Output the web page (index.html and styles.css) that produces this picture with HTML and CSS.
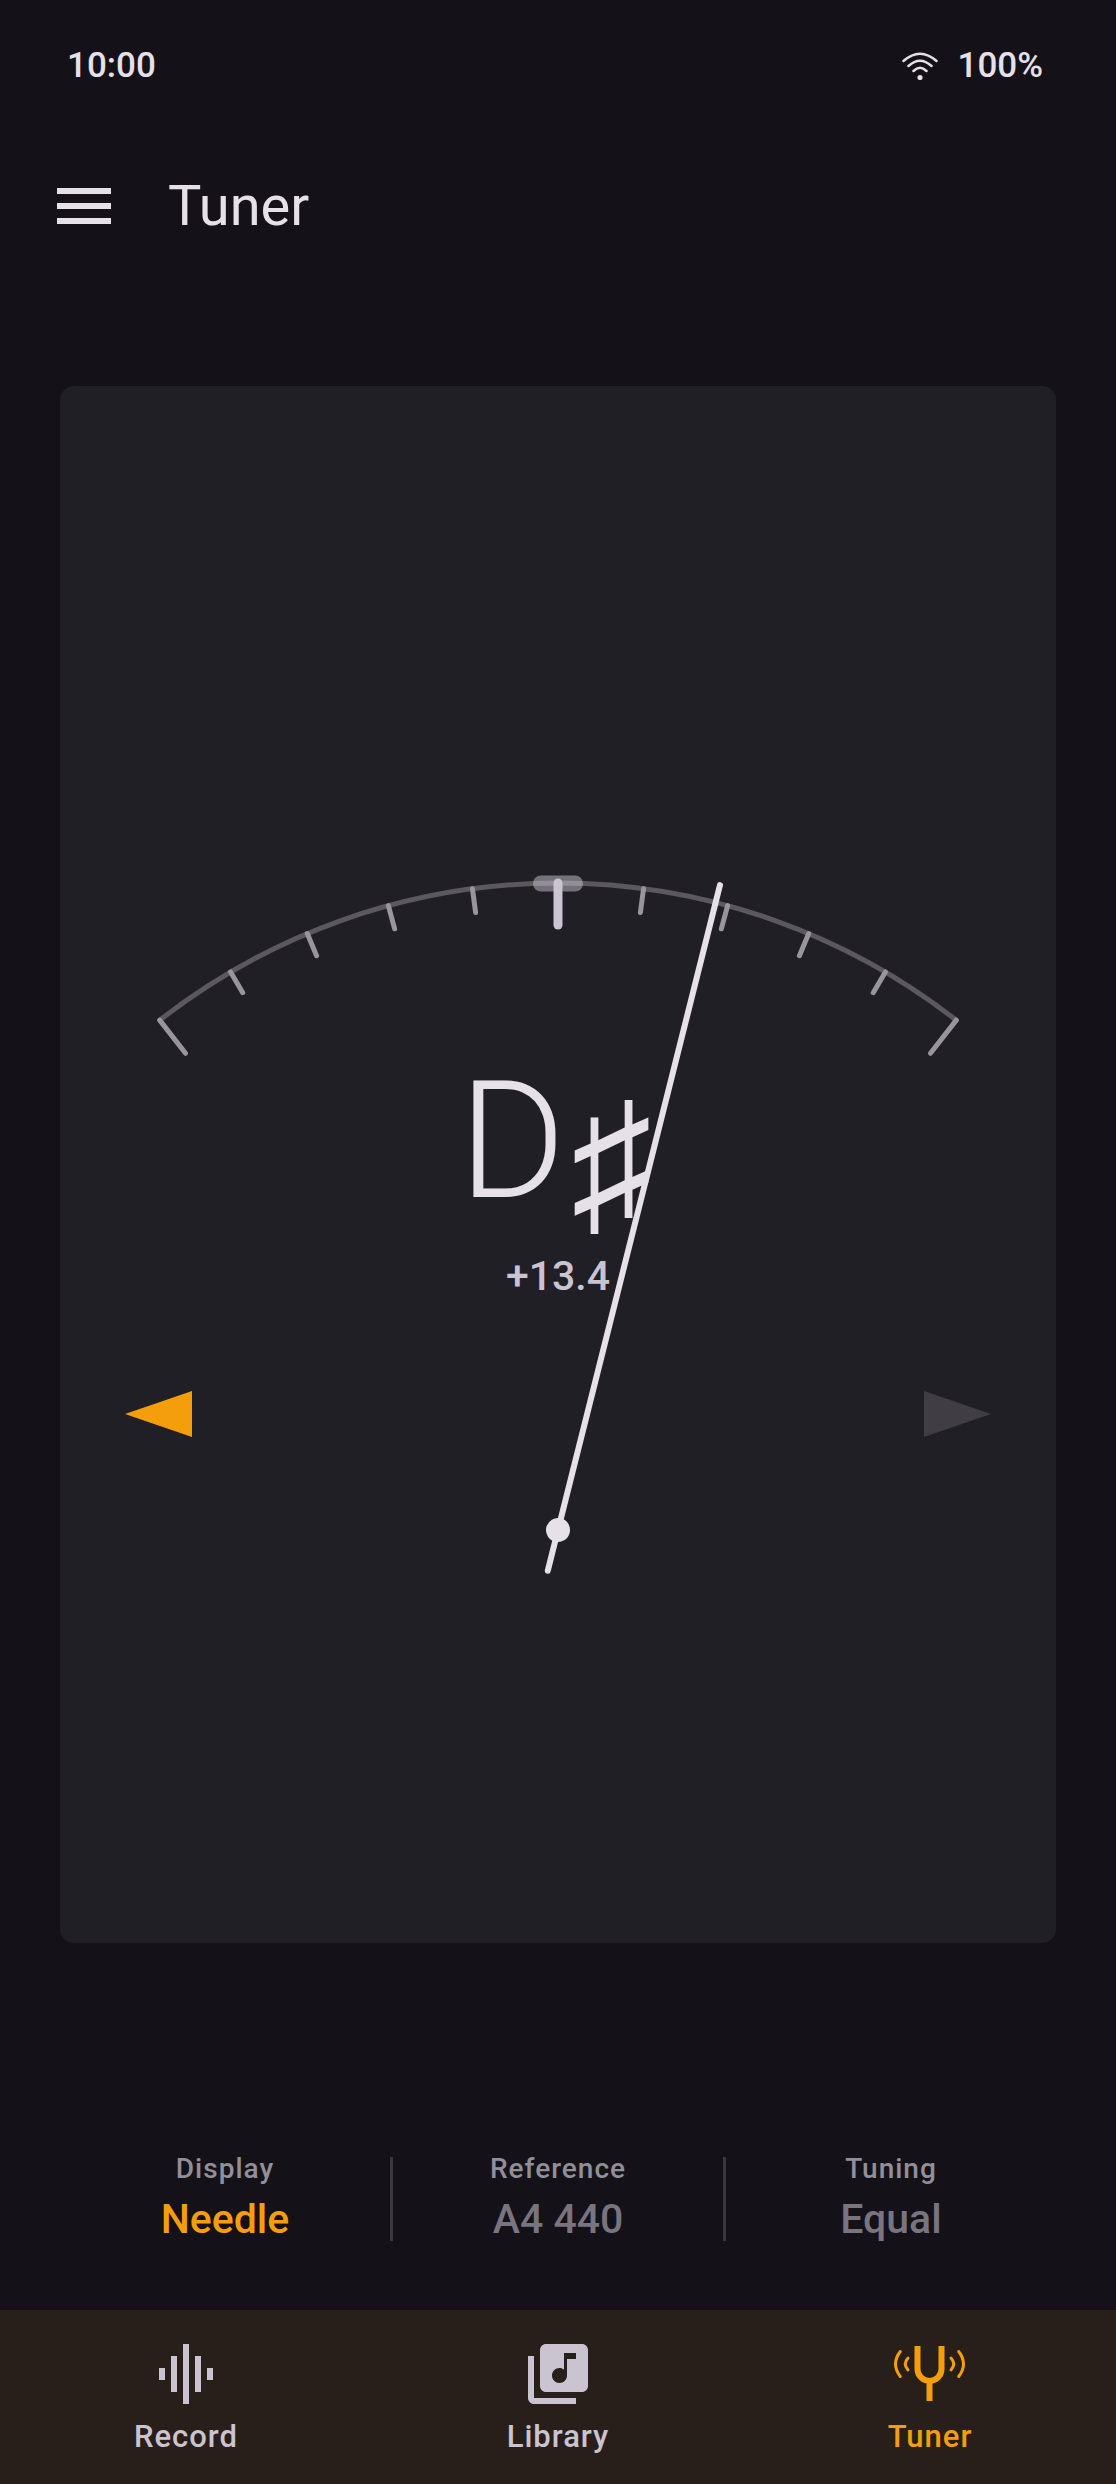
FILE: index.html
```html
<!DOCTYPE html>
<html lang="en">
<head>
<meta charset="utf-8">
<meta name="viewport" content="width=device-width, initial-scale=1">
<title>Tuner</title>
<link rel="stylesheet" href="styles.css">
</head>
<body>
<div class="app">
  <div class="status">
    <span>10:00</span>
    <span class="status-right">
      <svg class="wifi" viewBox="0 0 36 28" aria-hidden="true">
        <path d="M1.500 9Q18-5.500 34.500 9M6.500 14Q18 3.500 29.500 14M11.500 19Q18 12.500 24.500 19"/>
        <circle cx="18" cy="25.500" r="2.600"/>
      </svg>
      <span>100%</span>
    </span>
  </div>

  <header class="topbar">
    <button class="menu" type="button" aria-label="Menu">
      <svg viewBox="0 0 24 24" aria-hidden="true"><path d="M3 18h18v-2H3v2zm0-5h18v-2H3v2zm0-7v2h18V6H3z"/></svg>
    </button>
    <h1 class="title">Tuner</h1>
  </header>

  <main class="card">
    <div class="gauge">
      <div class="readout">
        <div class="note"><span>D</span><span class="accidental">♯</span></div>
        <div class="cents">+13.4</div>
      </div>
      <svg class="dial" viewBox="0 0 996 820" aria-hidden="true">
        <path class="arc" d="M99.700 265.200A647 647 0 0 1 896.300 265.200"/>
        <path class="zone" d="M481 128.500H515"/>
        <g class="ticks">
          <path d="M498 128v42" transform="rotate(-38 498 775)"/>
          <path d="M498 128v24" transform="rotate(-30.400 498 775)"/>
          <path d="M498 128v24" transform="rotate(-22.800 498 775)"/>
          <path d="M498 128v24" transform="rotate(-15.200 498 775)"/>
          <path d="M498 128v24" transform="rotate(-7.600 498 775)"/>
          <path d="M498 128v24" transform="rotate(7.600 498 775)"/>
          <path d="M498 128v24" transform="rotate(15.200 498 775)"/>
          <path d="M498 128v24" transform="rotate(22.800 498 775)"/>
          <path d="M498 128v24" transform="rotate(30.400 498 775)"/>
          <path d="M498 128v42" transform="rotate(38 498 775)"/>
        </g>
        <path class="centre" d="M498 128v42"/>
        <path class="flat on" d="M65 659L132 636V682Z"/>
        <path class="sharp" d="M931 659L864 636V682Z"/>
        <g class="needle" transform="rotate(14.100 498 775)">
          <path d="M498 110V817"/>
          <circle cx="498" cy="775" r="12"/>
        </g>
      </svg>
    </div>
  </main>

  <section class="settings">
    <button class="setting" type="button"><span class="setting-label">Display</span><span class="setting-value active">Needle</span></button>
    <button class="setting" type="button"><span class="setting-label">Reference</span><span class="setting-value">A4 440</span></button>
    <button class="setting" type="button"><span class="setting-label">Tuning</span><span class="setting-value">Equal</span></button>
  </section>

  <nav class="tabs">
    <a class="tab" href="#record">
      <svg viewBox="0 0 24 24" aria-hidden="true"><path d="M7 18h2V6H7v12zm4 4h2V2h-2v20zm-8-8h2v-4H3v4zm12 4h2V6h-2v12zm4-8v4h2v-4h-2z"/></svg>
      <span>Record</span>
    </a>
    <a class="tab" href="#library">
      <svg viewBox="0 0 24 24" aria-hidden="true"><path d="M20 2H8c-1.100 0-2 .9-2 2v12c0 1.100.9 2 2 2h12c1.100 0 2-.9 2-2V4c0-1.100-.9-2-2-2zm-2 5h-3v5.500c0 1.380-1.120 2.500-2.500 2.500S10 13.880 10 12.500s1.120-2.500 2.500-2.500c.57 0 1.080.19 1.500.51V5h4v2zM4 6H2v14c0 1.100.9 2 2 2h14v-2H4V6z"/></svg>
      <span>Library</span>
    </a>
    <a class="tab current" href="#tuner" aria-current="page">
      <svg class="fork" viewBox="0 0 72 72" aria-hidden="true">
        <path class="prongs" d="M23.500 8V31A12 12 0 0 0 47.500 31V8M35.500 42V63"/>
        <path class="waves" d="M14 20Q8.500 25.800 14 32M6.300 13.500Q-3.300 25.800 6.300 38.500M57 20Q62.500 25.800 57 32M64.700 13.500Q74.300 25.800 64.700 38.500"/>
      </svg>
      <span>Tuner</span>
    </a>
  </nav>
</div>
</body>
</html>
```
FILE: styles.css
```css
* {
  box-sizing: border-box;
}

body {
  margin: 0;
  background: #141218;
  color: #e6e0e9;
  font-family: Roboto, "Liberation Sans", sans-serif;
}

button {
  padding: 0;
  border: 0;
  background: none;
  color: inherit;
  font: inherit;
}

svg {
  display: block;
}

.app {
  display: flex;
  flex-direction: column;
  min-height: 100vh;
}

.status {
  display: flex;
  justify-content: space-between;
  align-items: center;
  height: 132px;
  padding: 0 73px 0 67px;
  font-size: 35px;
  font-weight: 500;
  line-height: 44px;
}

.status-right {
  display: flex;
  align-items: center;
  gap: 20px;
}

.wifi {
  width: 36px;
  height: 28px;
  fill: #e6e0e9;
}

.wifi path {
  fill: none;
  stroke: #e6e0e9;
  stroke-width: 2.500;
  stroke-linecap: round;
}

.topbar {
  display: flex;
  align-items: center;
  gap: 48px;
  height: 148px;
  padding: 0 48px;
}

.menu svg {
  width: 72px;
  height: 72px;
  fill: currentColor;
}

.title {
  margin: 0;
  font-size: 56px;
  font-weight: 400;
  line-height: 72px;
}

.card {
  display: flex;
  flex: 1;
  align-items: center;
  margin: 106px 60px 0;
  border-radius: 14px;
  background: #211f26;
}

.gauge {
  display: grid;
  width: 100%;
}

.readout,
.dial {
  grid-area: 1 / 1;
}

.readout {
  padding-top: 291px;
  text-align: center;
}

.note {
  display: flex;
  justify-content: center;
  gap: 5px;
  padding-right: 5px;
  font-size: 163px;
  font-weight: 300;
  line-height: 192px;
}

.accidental {
  padding-top: 20px;
  font-family: "DejaVu Sans", sans-serif;
}

.cents {
  color: #cac4d0;
  font-size: 41px;
  font-weight: 500;
  line-height: 36px;
}

.dial {
  width: 100%;
  fill: none;
  stroke-linecap: round;
}

.arc {
  stroke: #5b585e;
  stroke-width: 5;
}

.zone {
  stroke: #cac4d0;
  stroke-opacity: 0.500;
  stroke-width: 16;
}

.ticks {
  stroke: #99959c;
  stroke-width: 5;
}

.centre {
  stroke: #cac4d0;
  stroke-width: 9;
}

.flat,
.sharp {
  fill: #403d44;
}

.on {
  fill: #f59e0b;
}

.needle {
  fill: #e6e0e9;
  stroke: #e6e0e9;
  stroke-width: 6;
}

.needle circle {
  stroke: none;
}

.settings {
  display: flex;
  margin: 214px 60px 69px;
}

.setting {
  display: flex;
  flex: 1;
  flex-direction: column;
  align-items: center;
  gap: 16px;
  color: #79747e;
  font-weight: 500;
}

.setting + .setting {
  border-left: 3px solid #3a373e;
}

.setting-label {
  color: #938f99;
  font-size: 28px;
  letter-spacing: 1px;
  line-height: 24px;
}

.setting-value {
  font-size: 41px;
  line-height: 44px;
}

.active {
  color: #f59e0b;
}

.tabs {
  display: flex;
  height: 174px;
  padding-top: 28px;
  background: #281f1a;
}

.tab {
  display: flex;
  flex: 1;
  flex-direction: column;
  align-items: center;
  gap: 7px;
  color: #cac4d0;
  font-size: 31px;
  font-weight: 500;
  letter-spacing: 1px;
  line-height: 40px;
  text-decoration: none;
}

.tab svg {
  width: 72px;
  height: 72px;
  fill: currentColor;
}

.current {
  color: #f59e0b;
}

.tab .fork {
  overflow: visible;
  fill: none;
  stroke: currentColor;
}

.prongs {
  stroke-width: 6;
}

.waves {
  stroke-width: 3;
  stroke-linecap: round;
}
```
